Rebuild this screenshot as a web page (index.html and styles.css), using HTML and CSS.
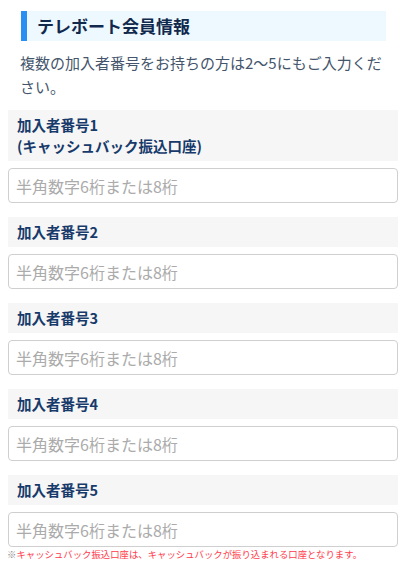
FILE: index.html
```html
<!DOCTYPE html>
<html lang="ja">
<head>
	<meta charset="UTF-8">
	<meta name="viewport" content="width=device-width, initial-scale=1.0">
	<title>テレボート会員情報</title>
	<link rel="stylesheet" href="styles.css">
</head>
<body>
	<div class="member-form">
		<h2 class="section-title">テレボート会員情報</h2>
		<p class="lead">複数の加入者番号をお持ちの方は2〜5にもご入力ください。</p>

		<div class="field">
			<div class="field-label">加入者番号1<br>(キャッシュバック振込口座)</div>
			<input class="field-input" type="text" placeholder="半角数字6桁または8桁">
		</div>
		<div class="field">
			<div class="field-label">加入者番号2</div>
			<input class="field-input" type="text" placeholder="半角数字6桁または8桁">
		</div>
		<div class="field">
			<div class="field-label">加入者番号3</div>
			<input class="field-input" type="text" placeholder="半角数字6桁または8桁">
		</div>
		<div class="field">
			<div class="field-label">加入者番号4</div>
			<input class="field-input" type="text" placeholder="半角数字6桁または8桁">
		</div>
		<div class="field last">
			<div class="field-label">加入者番号5</div>
			<input class="field-input" type="text" placeholder="半角数字6桁または8桁">
		</div>
		<p class="note"><span class="mark">※</span>キャッシュバック振込口座は、キャッシュバックが振り込まれる口座となります。</p>
	</div>
</body>
</html>
```

FILE: styles.css
```css
/* 全体 */
body{
	margin: 0;
	background: #fff;
	font-family: "Noto Sans CJK JP", "Noto Sans", sans-serif;
}
.member-form{padding: 11px 11px 0 8px;}

/* 見出し */
.section-title{
	margin: 0 12px 0 13px;
	height: 30px;
	padding-left: 10px;
	border-left: 6px solid #2a8ff2;
	background: #eef8ff;
	color: #10294d;
	font-size: 17px; font-weight: bold;
	line-height: 30px;
}
.lead{
	margin: 10px 0 11px 12px;
	padding-right: 4px;
	color: #44556c;
	font-size: 15px;
	line-height: 24px;
}

/* 入力欄 */
.field{margin-bottom: 14px;}
.field.last{margin-bottom: 1px;}
.field-label{
	padding: 4px 9px 5px;
	background: #f6f6f6;
	color: #173a6b;
	font-size: 14.5px; font-weight: bold;
	line-height: 21px;
}
.field-input{
	display: block;
	box-sizing: border-box;
	width: 100%; height: 35px;
	margin-top: 7px;
	padding: 0 7px;
	border: 1px solid #cfcfcf;
	border-radius: 4px;
	font-family: inherit;
	font-size: 16px;
	color: #333;
}
.field-input::placeholder{color: #ababab;}

/* 注意書き */
.note{
	margin: 0 0 0 -1px;
	color: #ff3b4c;
	font-size: 9.4px;
	line-height: 12px;
	white-space: nowrap;
}
.note .mark{color: #8a8a8a;}
```
